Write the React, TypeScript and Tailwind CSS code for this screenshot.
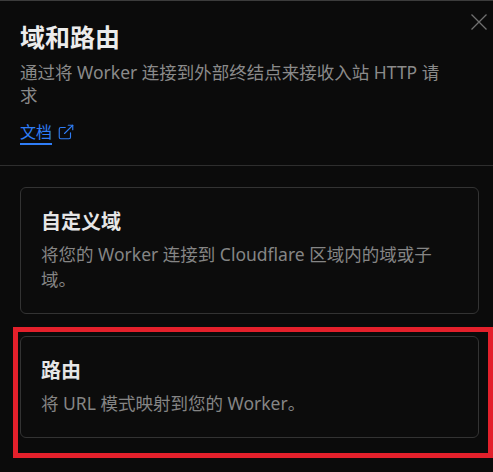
import { ExternalLink } from 'lucide-react';

type RouteOption = {
  title: string;
  description: string;
  highlighted?: boolean;
};

const options: RouteOption[] = [
  {
    title: '自定义域',
    description: '将您的 Worker 连接到 Cloudflare 区域内的域或子域。',
  },
  {
    title: '路由',
    description: '将 URL 模式映射到您的 Worker。',
    highlighted: true,
  },
];

const fontStack = {
  fontFamily: '"Noto Sans", "Noto Sans CJK SC", sans-serif',
};

const OptionCard = ({ option }: { option: RouteOption }) => (
  <div className="relative">
    <div className="rounded-md border border-[#333333] bg-[#0c0c0c] pl-5 pr-[33px] pt-[21px] pb-[21px]">
      <h3 className="text-[20px] leading-[26px] font-bold text-[#e6e6e6]">{option.title}</h3>
      <p className="mt-[7px] text-[17.5px] leading-[25px] text-[#858585]">{option.description}</p>
    </div>
    {/* annotation frame */}
    {option.highlighted && (
      <div className="pointer-events-none absolute -left-[7px] -top-[9px] -right-[14px] -bottom-[20px] border-[5px] border-[#e3202b]" />
    )}
  </div>
);

export default function App() {
  return (
    <div className="h-[472px] w-full overflow-hidden border-t border-[#3c3c3c] bg-[#0b0b0b]" style={fontStack}>
      <div className="relative border-b border-[#2e2e2e] pl-5 pr-[42px] pt-[20px] pb-[21px]">
        <button className="absolute right-[6px] top-[13px] text-[#707070]">
          <svg width="16" height="16" viewBox="0 0 16 16" fill="none" stroke="currentColor" strokeWidth="1.3">
            <path d="M0.5 0.5L15.5 15.5M15.5 0.5L0.5 15.5" />
          </svg>
        </button>
        <h2 className="text-[25px] leading-8 font-bold text-[#ececec]">域和路由</h2>
        <p className="mt-[8px] text-[17.5px] leading-[23px] text-[#8a8a8a]">
          通过将 Worker 连接到外部终结点来接收入站 HTTP 请求
        </p>
        <a href="#" className="mt-[13px] inline-flex items-center gap-[5px] text-base leading-6 text-[#2f7df6]">
          <span className="underline underline-offset-[5px] decoration-[1.5px]">文档</span>
          <ExternalLink size={18} strokeWidth={1.5} />
        </a>
      </div>
      <div className="flex flex-col gap-[22px] pl-5 pr-[14px] pt-[21px]">
        {options.map((option) => (
          <OptionCard key={option.title} option={option} />
        ))}
      </div>
    </div>
  );
}
